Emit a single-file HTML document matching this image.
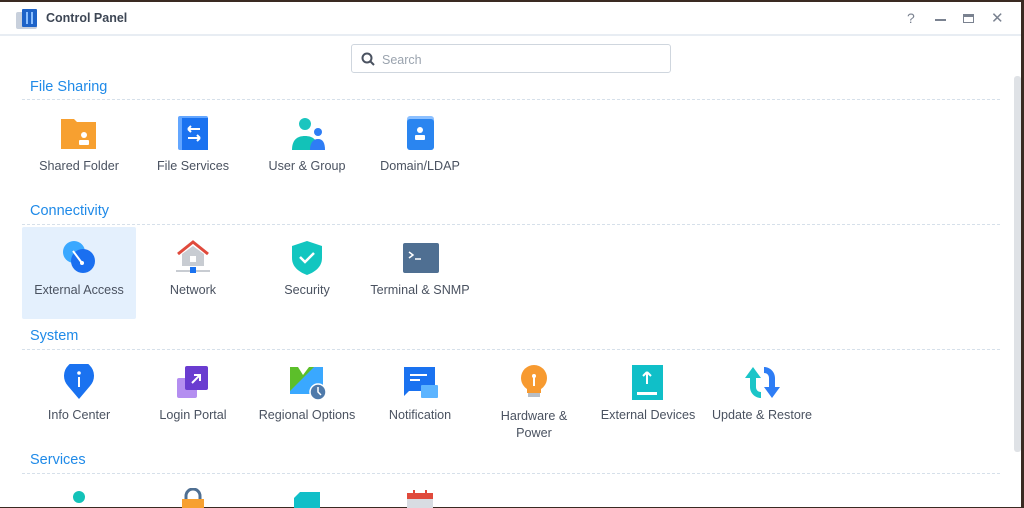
<!DOCTYPE html><html><head><style>
*{margin:0;padding:0;box-sizing:border-box}
body{width:1024px;height:507px;overflow:hidden;background:#3a2a22;font-family:"Liberation Sans",sans-serif;position:relative}
.win{position:absolute;left:0;top:2px;width:1021px;height:505px;background:#fff}
.title{position:absolute;left:0;top:0;width:100%;height:34px;border-bottom:2px solid #e8edf3}
.title .t{position:absolute;left:46px;top:9px;font-size:12.5px;font-weight:bold;color:#3d4654}
.ctl{position:absolute;top:8px;font-size:14px;color:#7a8290}
.search{position:absolute;left:351px;top:42px;width:320px;height:29px;border:1px solid #cfd6de;border-radius:3px}
.search span{position:absolute;left:30px;top:8px;font-size:12.5px;color:#9aa3ae}
.h{position:absolute;left:30px;font-size:14.5px;color:#1f8ae8}
.line{position:absolute;left:22px;width:978px;border-top:1px dashed #d6e0ea}
.it{position:absolute;width:114px;text-align:center;font-size:12.6px;color:#4a5260}
.it svg{display:block;margin:0 auto}
.sel{position:absolute;left:22px;top:227px;width:114px;height:92px;background:#e4f0fd;border-radius:2px}
.sb{position:absolute;left:1014px;top:74px;width:7px;height:376px;background:#dfe2e6;border-radius:3px}
</style></head><body>
<div class="win">
<div class="title">
<svg style="position:absolute;left:16px;top:7px" width="21" height="21"><rect x="0" y="3" width="21" height="17" rx="2" fill="#c8d0dc"/><rect x="6" y="0" width="15" height="18" rx="1" fill="#1e63c8"/><rect x="10" y="3" width="2" height="12" fill="#8cc0ff"/><rect x="15" y="3" width="2" height="12" fill="#8cc0ff"/></svg>
<div class="t">Control Panel</div>
<div class="ctl" style="left:907px">?</div>
<div style="position:absolute;left:935px;top:17px;width:11px;height:2px;background:#7a8290"></div>
<div style="position:absolute;left:963px;top:12px;width:11px;height:9px;border:1.5px solid #7a8290;border-top-width:3px"></div>
<div class="ctl" style="left:991px;top:7px;font-size:15px">✕</div>
</div>
<div class="search"><svg style="position:absolute;left:9px;top:7px" width="14" height="14"><circle cx="6" cy="6" r="4.5" fill="none" stroke="#4a5260" stroke-width="2"/><line x1="9.5" y1="9.5" x2="13" y2="13" stroke="#4a5260" stroke-width="2"/></svg><span>Search</span></div>
<div class="sb"></div>
</div>
<div class="h" style="top:79px">File Sharing</div><div class="line" style="top:99px"></div>
<div class="h" style="top:203px">Connectivity</div><div class="line" style="top:224px"></div>
<div class="sel"></div>
<div class="h" style="top:328px">System</div><div class="line" style="top:349px"></div>
<div class="h" style="top:452px">Services</div><div class="line" style="top:473px"></div>

<div class="it" style="left:22px;top:116px"><svg width="38" height="36"><path d="M1 3h13l3 3h19v27H1z" fill="#f7a030"/><circle cx="24" cy="19" r="3" fill="#fff"/><rect x="19" y="24" width="10" height="5" rx="1" fill="#fff"/></svg><div style="margin-top:7px">Shared Folder</div></div>
<div class="it" style="left:136px;top:116px"><svg width="38" height="36"><rect x="4" y="0" width="30" height="34" rx="2" fill="#63a6ff"/><rect x="8" y="2" width="26" height="32" fill="#1a72f0"/><path d="M14 13h12M14 13l3-3M14 13l3 3M26 22H14M26 22l-3-3M26 22l-3 3" stroke="#fff" stroke-width="2" fill="none"/></svg><div style="margin-top:7px">File Services</div></div>
<div class="it" style="left:250px;top:116px"><svg width="38" height="36"><circle cx="17" cy="8" r="6" fill="#1bc5bf"/><circle cx="30" cy="16" r="4" fill="#2e7df5"/><path d="M4 34c0-10 5-14 13-14s13 4 13 14z" fill="#12c2b8"/><path d="M22 34c0-7 3-11 8-11s7 4 7 11z" fill="#2e7df5"/></svg><div style="margin-top:7px">User &amp; Group</div></div>
<div class="it" style="left:363px;top:116px"><svg width="38" height="36"><rect x="6" y="0" width="27" height="34" rx="3" fill="#8cc0ff"/><rect x="6" y="3" width="27" height="31" rx="3" fill="#2a85f0"/><circle cx="19" cy="14" r="3" fill="#fff"/><rect x="14" y="19" width="10" height="5" rx="1" fill="#fff"/></svg><div style="margin-top:7px">Domain/LDAP</div></div>

<div class="it" style="left:22px;top:240px"><svg width="38" height="36"><circle cx="14" cy="12" r="11" fill="#3aa8ff"/><circle cx="23" cy="21" r="12" fill="#1a6ff0"/><line x1="13" y1="11" x2="22" y2="23" stroke="#fff" stroke-width="2"/><circle cx="22" cy="23" r="2" fill="#fff"/></svg><div style="margin-top:7px">External Access</div></div>
<div class="it" style="left:136px;top:240px"><svg width="38" height="36"><path d="M4 14L19 2l15 12" stroke="#e04a3c" stroke-width="3" fill="none"/><path d="M8 14L19 6l11 8v12H8z" fill="#c8ccd2"/><rect x="16" y="16" width="6" height="6" fill="#fff"/><rect x="2" y="30" width="34" height="2" fill="#c8ccd2"/><rect x="16" y="27" width="6" height="6" fill="#1a72f0"/></svg><div style="margin-top:7px">Network</div></div>
<div class="it" style="left:250px;top:240px"><svg width="38" height="36"><path d="M19 1l15 5v12c0 9-7 14-15 17C11 32 4 27 4 18V6z" fill="#12c6c0"/><path d="M12 17l5 5 9-9" stroke="#fff" stroke-width="2.5" fill="none"/></svg><div style="margin-top:7px">Security</div></div>
<div class="it" style="left:363px;top:240px"><svg width="38" height="36"><rect x="2" y="3" width="36" height="30" rx="2" fill="#4f6f92"/><path d="M8 12l4 3-4 3M14 19h6" stroke="#fff" stroke-width="1.5" fill="none"/></svg><div style="margin-top:7px">Terminal &amp; SNMP</div></div>

<div class="it" style="left:22px;top:364px"><svg width="38" height="36"><path d="M19 35L8 22a15 15 0 1 1 22 0z" fill="#1a72f0"/><circle cx="19" cy="9" r="1.8" fill="#fff"/><rect x="18" y="13" width="2" height="10" fill="#fff"/></svg><div style="margin-top:8px">Info Center</div></div>
<div class="it" style="left:136px;top:364px"><svg width="38" height="36"><rect x="3" y="14" width="20" height="20" rx="2" fill="#b48ef0"/><rect x="11" y="2" width="23" height="24" rx="2" fill="#6a3cd0"/><path d="M18 19l8-8M20 11h6v6" stroke="#fff" stroke-width="2" fill="none"/></svg><div style="margin-top:8px">Login Portal</div></div>
<div class="it" style="left:250px;top:364px"><svg width="38" height="36"><rect x="2" y="3" width="33" height="27" fill="#3aa8ff"/><path d="M2 3h24L2 27z" fill="#5cbf2a"/><path d="M10 3l5 8 6-8z" fill="#fff"/><circle cx="30" cy="28" r="8" fill="#4f7aaa" stroke="#fff" stroke-width="1.5"/><path d="M30 23v5l3 3" stroke="#fff" stroke-width="1.5" fill="none"/></svg><div style="margin-top:8px">Regional Options</div></div>
<div class="it" style="left:363px;top:364px"><svg width="38" height="36"><path d="M3 3h31v24H8l-5 5z" fill="#1a72f0"/><rect x="20" y="21" width="17" height="13" rx="1" fill="#5cb4ff"/><rect x="9" y="10" width="17" height="2" fill="#fff"/><rect x="9" y="15" width="10" height="2" fill="#fff"/></svg><div style="margin-top:8px">Notification</div></div>
<div class="it" style="left:477px;top:364px"><svg width="38" height="36"><circle cx="19" cy="14" r="13" fill="#f79a30"/><path d="M12 24h14v5H12z" fill="#f79a30"/><rect x="13" y="29" width="12" height="4" fill="#b8bec6"/><rect x="18" y="12" width="2" height="10" fill="#fff"/><circle cx="19" cy="12" r="2" fill="#fff"/></svg><div style="margin-top:8px;line-height:17px">Hardware &amp;<br>Power</div></div>
<div class="it" style="left:591px;top:364px"><svg width="38" height="36"><rect x="3" y="1" width="31" height="35" fill="#10bfc8"/><path d="M18 8v12M18 8l-4 4M18 8l4 4" stroke="#fff" stroke-width="2" fill="none"/><rect x="8" y="28" width="20" height="3" fill="#fff"/></svg><div style="margin-top:8px">External Devices</div></div>
<div class="it" style="left:705px;top:364px"><svg width="38" height="36"><path d="M21 3c6 0 11 5 11 11v9h5l-8 11-8-11h5v-9c0-3-2-5-5-5z" fill="#2e7df5"/><path d="M18 34c-6 0-11-5-11-11v-9H2l8-11 8 11h-5v9c0 3 2 5 5 5z" fill="#1bc5c8"/></svg><div style="margin-top:8px">Update &amp; Restore</div></div>

<div class="it" style="left:22px;top:488px"><svg width="38" height="20"><circle cx="19" cy="9" r="6" fill="#12c2b8"/></svg></div>
<div class="it" style="left:136px;top:488px"><svg width="38" height="20"><path d="M12 12V8a7 7 0 0 1 14 0v4" stroke="#4f6f92" stroke-width="3" fill="none"/><rect x="8" y="11" width="22" height="9" fill="#f7a030"/></svg></div>
<div class="it" style="left:250px;top:488px"><svg width="38" height="20"><path d="M6 10l6-6h20v16H6z" fill="#10bfc8"/></svg></div>
<div class="it" style="left:363px;top:488px"><svg width="38" height="20"><rect x="6" y="5" width="26" height="15" fill="#d8dce2"/><rect x="6" y="5" width="26" height="6" fill="#e04a3c"/><rect x="12" y="2" width="2" height="6" fill="#e04a3c"/><rect x="24" y="2" width="2" height="6" fill="#e04a3c"/></svg></div>
</body></html>
